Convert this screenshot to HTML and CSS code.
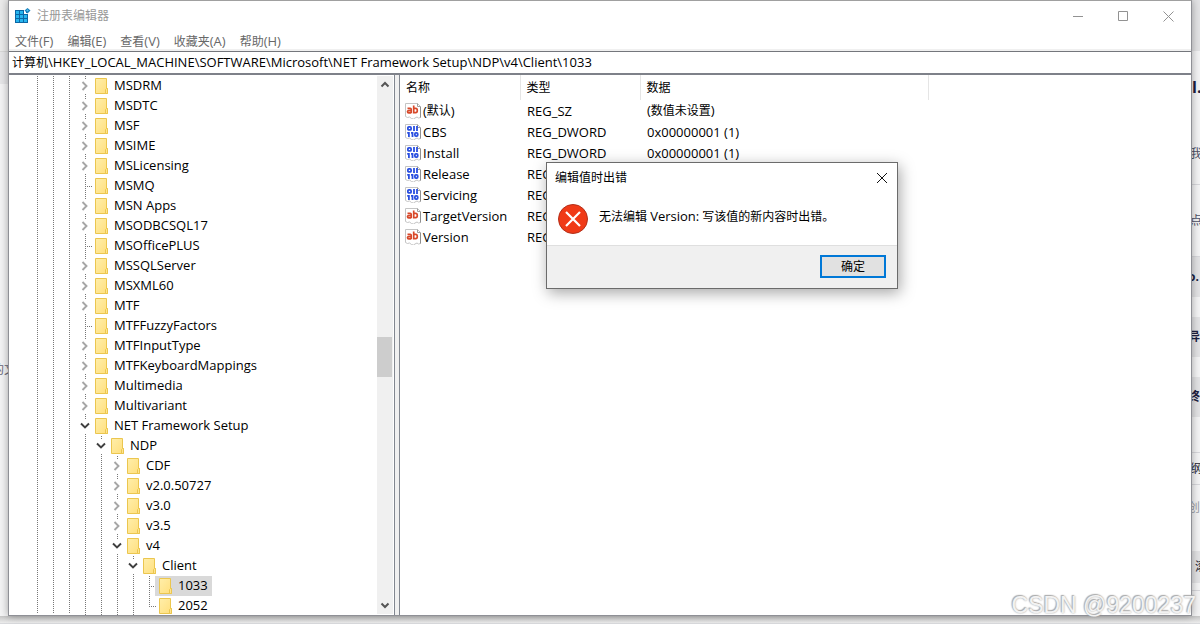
FILE: index.html
```html
<!DOCTYPE html>
<html lang="zh-CN">
<head>
<meta charset="utf-8">
<title>注册表编辑器</title>
<link rel="stylesheet" href="styles.css">
</head>
<body>
<svg class="defs" width="0" height="0" aria-hidden="true">
  <defs>
    <linearGradient id="paper" x1="0" y1="0" x2="1" y2="1"><stop offset="0" stop-color="#ffeeaa"/><stop offset="1" stop-color="#ffdf7c"/></linearGradient>
    <symbol id="folder" viewBox="0 0 16 16"><path d="M2.5.5h11v10h1v5h-12z" fill="url(#paper)" stroke="#ebc64f"/><path d="M12.500 15.500v-4l1-1h1v5z" fill="#ffe48e" stroke="#ebc64f"/></symbol>
    <symbol id="closed" viewBox="0 0 16 14"><path d="M5.500 3l4 4-4 4" fill="none" stroke="#a6a6a6" stroke-width="1.900"/></symbol>
    <symbol id="open" viewBox="0 0 16 14"><path d="M4 4.500l4 4 4-4" fill="none" stroke="#404040" stroke-width="1.900"/></symbol>
    <symbol id="sheet" viewBox="0 0 16 16"><path d="M.5.500h12l3 3v11l-2 .500-1.500-1-2 1-1.500 1-2-.500-2-1.500-2 .500-2-1z" fill="#fff" stroke="#c4c4c4"/><path d="M12.500.500v3h3" fill="none" stroke="#a0a0a0"/><path d="M15.500 4v10.500" stroke="#8f8f8f"/></symbol>
    <symbol id="string" viewBox="0 0 16 16"><use href="#sheet"/><g fill="none" stroke="#d8492a" stroke-width="1.700"><path d="M2.500 5.300h2.700q1 0 1 1v4M6 7.600H3.700q-1.200 0-1.200 1.100t1.200 1.100H6"/><path d="M8.700 2.500v8M8.700 5.300h2q1.600 0 1.600 2.200t-1.600 2.200h-2"/></g></symbol>
    <symbol id="binary" viewBox="0 0 16 16"><use href="#sheet"/><g fill="none" stroke="#2a4fe0" stroke-width="1.800"><rect x="2.900" y="2.900" width="3.200" height="3" rx="1"/><path d="M9 2v5M12 2v5M3.900 8v5M7.500 8v5M2.200 8.900h1.500M6 8.900h1.500"/><rect x="9.900" y="8.900" width="2.800" height="3.200" rx="1"/></g></symbol>
  </defs>
</svg>
<div class="desktop">
  <div class="edge edge-left" aria-hidden="true">
    <div class="left-top"></div><div class="left-head"></div><div class="left-body">的文</div>
  </div>
  <main class="window">
    <header class="titlebar">
      <svg class="app-icon" viewBox="0 0 16 16"><rect x="0" y="2" width="13" height="13" fill="#0b67a5"/><g fill="#27b5ee"><path d="M1 3h3v3H1zM5 3h3v3H5zM1 7h3v3H1zM5 7h3v3H5zM9 7h3v3H9zM1 11h3v3H1zM5 11h3v3H5zM9 11h3v3H9z"/></g><path d="M9 2h2v3h2v1H9z" fill="#fff"/><path d="M12.500 0l3 2.500-3 3-3-3z" fill="#1780bd"/><path d="M12.500 1.200l1.200 1.200-1.200 1.200-1.200-1.200z" fill="#52c7f3"/></svg>
      <h1>注册表编辑器</h1>
      <div class="controls">
        <button type="button" aria-label="最小化"><svg viewBox="0 0 11 11"><path d="M0 5.500h10"/></svg></button>
        <button type="button" aria-label="最大化"><svg viewBox="0 0 11 11"><path d="M.5.500h9v9h-9z"/></svg></button>
        <button type="button" aria-label="关闭"><svg viewBox="0 0 11 11"><path d="M.5.500l10 10M10.500.500l-10 10"/></svg></button>
      </div>
    </header>
    <nav class="menu">
      <button type="button">文件<span class="latin">(F)</span></button><button type="button">编辑<span class="latin">(E)</span></button><button type="button">查看<span class="latin">(V)</span></button><button type="button">收藏夹<span class="latin">(A)</span></button><button type="button">帮助<span class="latin">(H)</span></button>
    </nav>
    <div class="address"><span class="cjk">计算机</span>\HKEY_LOCAL_MACHINE\SOFTWARE\Microsoft\NET Framework Setup\NDP\v4\Client\1033</div>
    <div class="panes">
      <section class="tree-pane">
        <ul class="tree root">
          <li><div class="row"><button class="toggle" aria-label="展开"><svg><use href="#closed"/></svg></button><svg class="folder"><use href="#folder"/></svg><span>MSDRM</span></div></li>
          <li><div class="row"><button class="toggle" aria-label="展开"><svg><use href="#closed"/></svg></button><svg class="folder"><use href="#folder"/></svg><span>MSDTC</span></div></li>
          <li><div class="row"><button class="toggle" aria-label="展开"><svg><use href="#closed"/></svg></button><svg class="folder"><use href="#folder"/></svg><span>MSF</span></div></li>
          <li><div class="row"><button class="toggle" aria-label="展开"><svg><use href="#closed"/></svg></button><svg class="folder"><use href="#folder"/></svg><span>MSIME</span></div></li>
          <li><div class="row"><button class="toggle" aria-label="展开"><svg><use href="#closed"/></svg></button><svg class="folder"><use href="#folder"/></svg><span>MSLicensing</span></div></li>
          <li><div class="row"><i class="branch"></i><svg class="folder"><use href="#folder"/></svg><span>MSMQ</span></div></li>
          <li><div class="row"><button class="toggle" aria-label="展开"><svg><use href="#closed"/></svg></button><svg class="folder"><use href="#folder"/></svg><span>MSN Apps</span></div></li>
          <li><div class="row"><button class="toggle" aria-label="展开"><svg><use href="#closed"/></svg></button><svg class="folder"><use href="#folder"/></svg><span>MSODBCSQL17</span></div></li>
          <li><div class="row"><i class="branch"></i><svg class="folder"><use href="#folder"/></svg><span>MSOfficePLUS</span></div></li>
          <li><div class="row"><button class="toggle" aria-label="展开"><svg><use href="#closed"/></svg></button><svg class="folder"><use href="#folder"/></svg><span>MSSQLServer</span></div></li>
          <li><div class="row"><button class="toggle" aria-label="展开"><svg><use href="#closed"/></svg></button><svg class="folder"><use href="#folder"/></svg><span>MSXML60</span></div></li>
          <li><div class="row"><button class="toggle" aria-label="展开"><svg><use href="#closed"/></svg></button><svg class="folder"><use href="#folder"/></svg><span>MTF</span></div></li>
          <li><div class="row"><i class="branch"></i><svg class="folder"><use href="#folder"/></svg><span>MTFFuzzyFactors</span></div></li>
          <li><div class="row"><button class="toggle" aria-label="展开"><svg><use href="#closed"/></svg></button><svg class="folder"><use href="#folder"/></svg><span>MTFInputType</span></div></li>
          <li><div class="row"><button class="toggle" aria-label="展开"><svg><use href="#closed"/></svg></button><svg class="folder"><use href="#folder"/></svg><span>MTFKeyboardMappings</span></div></li>
          <li><div class="row"><button class="toggle" aria-label="展开"><svg><use href="#closed"/></svg></button><svg class="folder"><use href="#folder"/></svg><span>Multimedia</span></div></li>
          <li><div class="row"><button class="toggle" aria-label="展开"><svg><use href="#closed"/></svg></button><svg class="folder"><use href="#folder"/></svg><span>Multivariant</span></div></li>
          <li><div class="row"><button class="toggle" aria-label="折叠"><svg><use href="#open"/></svg></button><svg class="folder"><use href="#folder"/></svg><span>NET Framework Setup</span></div>
            <ul class="tree">
              <li><div class="row"><button class="toggle" aria-label="折叠"><svg><use href="#open"/></svg></button><svg class="folder"><use href="#folder"/></svg><span>NDP</span></div>
                <ul class="tree">
                  <li><div class="row"><button class="toggle" aria-label="展开"><svg><use href="#closed"/></svg></button><svg class="folder"><use href="#folder"/></svg><span>CDF</span></div></li>
                  <li><div class="row"><button class="toggle" aria-label="展开"><svg><use href="#closed"/></svg></button><svg class="folder"><use href="#folder"/></svg><span>v2.0.50727</span></div></li>
                  <li><div class="row"><button class="toggle" aria-label="展开"><svg><use href="#closed"/></svg></button><svg class="folder"><use href="#folder"/></svg><span>v3.0</span></div></li>
                  <li><div class="row"><button class="toggle" aria-label="展开"><svg><use href="#closed"/></svg></button><svg class="folder"><use href="#folder"/></svg><span>v3.5</span></div></li>
                  <li><div class="row"><button class="toggle" aria-label="折叠"><svg><use href="#open"/></svg></button><svg class="folder"><use href="#folder"/></svg><span>v4</span></div>
                    <ul class="tree">
                      <li><div class="row"><button class="toggle" aria-label="折叠"><svg><use href="#open"/></svg></button><svg class="folder"><use href="#folder"/></svg><span>Client</span></div>
                        <ul class="tree">
                          <li><div class="row"><i class="branch"></i><div class="selected"><svg class="folder"><use href="#folder"/></svg><span>1033</span></div></div></li>
                          <li class="last"><div class="row"><i class="branch"></i><svg class="folder"><use href="#folder"/></svg><span>2052</span></div></li>
                        </ul>
                      </li>
                    </ul>
                  </li>
                </ul>
              </li>
            </ul>
          </li>
        </ul>
        <div class="scrollbar">
          <button type="button" aria-label="向上滚动"><svg viewBox="0 0 16 16"><path d="M4.500 10l3.500-3.500 3.500 3.500"/></svg></button>
          <div class="track"><div class="thumb"></div></div>
          <button type="button" aria-label="向下滚动"><svg viewBox="0 0 16 16"><path d="M4.500 6l3.500 3.500 3.500-3.500"/></svg></button>
        </div>
      </section>
      <section class="values-pane">
        <table class="values">
          <colgroup><col class="c-name"><col class="c-type"><col class="c-data"><col></colgroup>
          <thead><tr><th>名称</th><th>类型</th><th>数据</th><th></th></tr></thead>
          <tbody>
            <tr><td><div class="name"><svg><use href="#string"/></svg>(<span class="cjk">默认</span>)</div></td><td>REG_SZ</td><td>(<span class="cjk">数值未设置</span>)</td><td></td></tr>
            <tr><td><div class="name"><svg><use href="#binary"/></svg>CBS</div></td><td>REG_DWORD</td><td>0x00000001 (1)</td><td></td></tr>
            <tr><td><div class="name"><svg><use href="#binary"/></svg>Install</div></td><td>REG_DWORD</td><td>0x00000001 (1)</td><td></td></tr>
            <tr><td><div class="name"><svg><use href="#binary"/></svg>Release</div></td><td>REG_DWORD</td><td></td><td></td></tr>
            <tr><td><div class="name"><svg><use href="#binary"/></svg>Servicing</div></td><td>REG_DWORD</td><td></td><td></td></tr>
            <tr><td><div class="name"><svg><use href="#string"/></svg>TargetVersion</div></td><td>REG_SZ</td><td></td><td></td></tr>
            <tr><td><div class="name"><svg><use href="#string"/></svg>Version</div></td><td>REG_SZ</td><td></td><td></td></tr>
          </tbody>
        </table>
      </section>
    </div>
  </main>
  <div class="edge edge-right" aria-hidden="true">
    <div class="s51 shade"></div>
    <div class="s72 bold big">l.</div>
    <div class="s62 rule soft">我</div>
    <div class="s72 rule soft">点</div>
    <div class="s40 shade bold">o.</div>
    <div class="s20"></div>
    <div class="s40 shade bold">异</div>
    <div class="s20"></div>
    <div class="s40 shade bold">终</div>
    <div class="s36 rule"></div>
    <div class="s32 rule">纲</div>
    <div class="s46 faint">创</div>
    <div class="s20"></div>
    <div class="s32 shade end">滚</div>
    <div class="s8 rule"></div>
  </div>
</div>
<div class="taskline" aria-hidden="true"></div>
<section class="dialog" role="alertdialog" aria-labelledby="dlg-title" aria-describedby="dlg-text">
  <header><h2 id="dlg-title">编辑值时出错</h2><button type="button" class="dlg-close" aria-label="关闭"><svg viewBox="0 0 12 12"><path d="M1 1l10 10M11 1L1 11"/></svg></button></header>
  <div class="message">
    <svg viewBox="0 0 30 30"><circle cx="15" cy="15" r="14.500" fill="#f03a17" stroke="#b3301a"/><path d="M8 8l14 14M22 8L8 22" stroke="#fff" stroke-width="2.200"/></svg>
    <p id="dlg-text">无法编辑 <span class="latin">Version:</span> 写该值的新内容时出错。</p>
  </div>
  <footer><button type="button" class="ok">确定</button></footer>
</section>
<div class="watermark">CSDN @9200237</div>
</body>
</html>
```

FILE: styles.css
```css
* { box-sizing: border-box; }
body {
  margin: 0;
  height: 100vh;
  display: flex;
  flex-direction: column;
  overflow: hidden;
  position: relative;
  background: #f3f3f4;
  color: #000;
  font: 13px/20px "Open Sans", "Noto Sans CJK SC", sans-serif;
}
button { margin: 0; padding: 0; border: 0; background: none; font: inherit; color: inherit; }
h1, h2, p { margin: 0; font-weight: normal; }
svg { display: block; flex: none; }
.defs { position: absolute; }
.cjk { font-size: 12px; }
.latin { font-size: 13px; }

.desktop { flex: 1; min-height: 0; display: flex; }
.taskline { height: 8px; border-bottom: 1px solid #d9dadd; background: linear-gradient(#c6c6c6, #ececec); }
.edge { width: 8px; overflow: hidden; font-size: 12px; white-space: nowrap; background: #f4f4f5; }
.edge-left { display: flex; flex-direction: column; }
.left-top { height: 52px; border-bottom: 1px solid #d8d8d8; background: #ebebeb; }
.left-head { height: 32px; background: #e6e6e8; }
.left-body { flex: 1; padding-top: 276px; text-indent: -8px; color: #667; }
.edge-right > div { display: flex; align-items: center; text-indent: -2px; color: #223; }
.edge-right .shade { background: #e3e3e5; }
.edge-right .bold { font-weight: bold; color: #1c2040; text-indent: -4px; }
.edge-right .big { font-size: 16px; text-indent: 0; }
.edge-right .soft { color: #4d5268; }
.edge-right .faint { color: #9a9da6; text-indent: -4px; }
.edge-right .end { text-indent: 3px; }
.edge-right .rule { border-bottom: 1px solid #d8d8dc; }
.s8 { height: 8px; }
.s20 { height: 20px; }
.s32 { height: 32px; }
.s36 { height: 36px; }
.s40 { height: 40px; }
.s46 { height: 46px; }
.s51 { height: 51px; }
.s62 { height: 62px; }
.s72 { height: 72px; }

.window {
  position: relative;
  flex: 1;
  min-width: 0;
  display: flex;
  flex-direction: column;
  border: 1px solid #8f9096;
  border-top-color: #a0a0a0;
  background: #fff;
  box-shadow: 0 0 8px rgba(0, 0, 0, .35);
}
.titlebar { display: flex; align-items: center; height: 30px; padding-left: 6px; font-size: 12px; color: #999; }
.titlebar h1 { margin-left: 6px; font-size: 12px; }
.app-icon { width: 16px; height: 16px; }
.controls { margin-left: auto; display: flex; }
.controls button { width: 45px; height: 28px; display: grid; place-items: center; }
.controls svg { width: 11px; height: 11px; fill: none; stroke: #929292; }
.menu { display: flex; gap: 14px; height: 20px; padding: 0 6px; border-bottom: 2px solid #f0f0f0; font-size: 12px; color: #686868; }
.address { height: 24px; padding: 0 3px; border-top: 1px solid #74767c; border-bottom: 2px solid #7e8189; line-height: 21px; white-space: nowrap; overflow: hidden; }

.panes { flex: 1; min-height: 0; display: flex; gap: 4px; background: #f0f0f0; }
.tree-pane { width: 386px; display: flex; overflow: hidden; padding: 1px 1px 1px 0; border-right: 1px solid #828790; background: #fff; }
.values-pane { flex: 1; min-width: 0; border-left: 1px solid #828790; background: #fff; }
.tree { --dots: repeating-linear-gradient(#777 0 1px, transparent 1px 2px); list-style: none; margin: 0; padding: 0 0 0 16px; }
.tree.root {
  flex: 1;
  min-width: 0;
  padding-left: 68px;
  background: var(--dots) 28px 0 / 1px 100% no-repeat, var(--dots) 44px 0 / 1px 100% no-repeat, var(--dots) 60px 0 / 1px 100% no-repeat;
}
.tree li { background: var(--dots) 8px 0 / 1px 100% no-repeat; }
.tree li.last { background-size: 1px 10px; }
.row { display: flex; align-items: center; height: 20px; white-space: nowrap; }
.row span { line-height: 18px; padding-bottom: 2px; }
.toggle { width: 16px; height: 14px; background: #fff; flex: none; }
.toggle svg { width: 16px; height: 14px; }
.branch { width: 16px; height: 1px; flex: none; background: repeating-linear-gradient(90deg, #777 0 1px, transparent 1px 2px) 8px 0 / 8px 1px no-repeat; }
.folder { width: 16px; height: 16px; margin-right: 5px; }
.selected { display: flex; align-items: center; height: 20px; margin-left: -2px; padding: 0 4px 0 2px; background: #d9d9d9; }
.scrollbar { width: 16px; display: flex; flex-direction: column; background: #f0f0f0; }
.scrollbar button, .scrollbar svg { width: 16px; height: 17px; }
.scrollbar path { fill: none; stroke: #555; stroke-width: 2; }
.track { flex: 1; padding-top: 244px; }
.thumb { width: 15px; height: 40px; background: #cdcdcd; }

.values { width: 100%; table-layout: fixed; border-collapse: collapse; }
.c-name, .c-type { width: 120px; }
.c-data { width: 288px; }
.values th { height: 25px; padding: 0 6px; border-right: 1px solid #e5e5e5; font-size: 12px; font-weight: normal; text-align: left; }
.values th:last-child { border-right: 0; }
.values td { height: 21px; padding: 0 0 1px 7px; line-height: 20px; white-space: nowrap; }
.values td:first-child { padding-left: 5px; }
.name { display: flex; align-items: center; }
.name svg { width: 16px; height: 16px; margin-right: 2px; }

.dialog {
  position: absolute;
  left: 546px;
  top: 162px;
  width: 352px;
  border: 1px solid #6b6b6b;
  background: #fff;
  box-shadow: 2px 4px 14px rgba(0, 0, 0, .35);
  font-size: 12px;
}
.dialog header { display: flex; align-items: center; height: 29px; padding: 0 9px 0 8px; }
.dialog h2 { font-size: 12px; }
.dlg-close { margin-left: auto; }
.dlg-close svg { width: 12px; height: 12px; fill: none; stroke: #111; }
.message { display: flex; height: 53px; padding: 12px 11px 11px; gap: 11px; }
.message svg { width: 30px; height: 30px; }
.message p { line-height: 24px; }
.dialog footer { display: flex; justify-content: flex-end; padding: 9px 11px 10px; border-top: 1px solid #dfdfdf; background: #f0f0f0; }
.ok { width: 66px; height: 23px; line-height: 19px; border: 2px solid #0078d7; background: #e1e1e1; }

.watermark {
  position: absolute;
  right: 4px;
  bottom: 6px;
  font: 23px/26px "Liberation Sans", sans-serif;
  color: #f2f2f2;
  text-shadow: -1px -1px 1px #aaa, 0 0 2px #999;
}
```
